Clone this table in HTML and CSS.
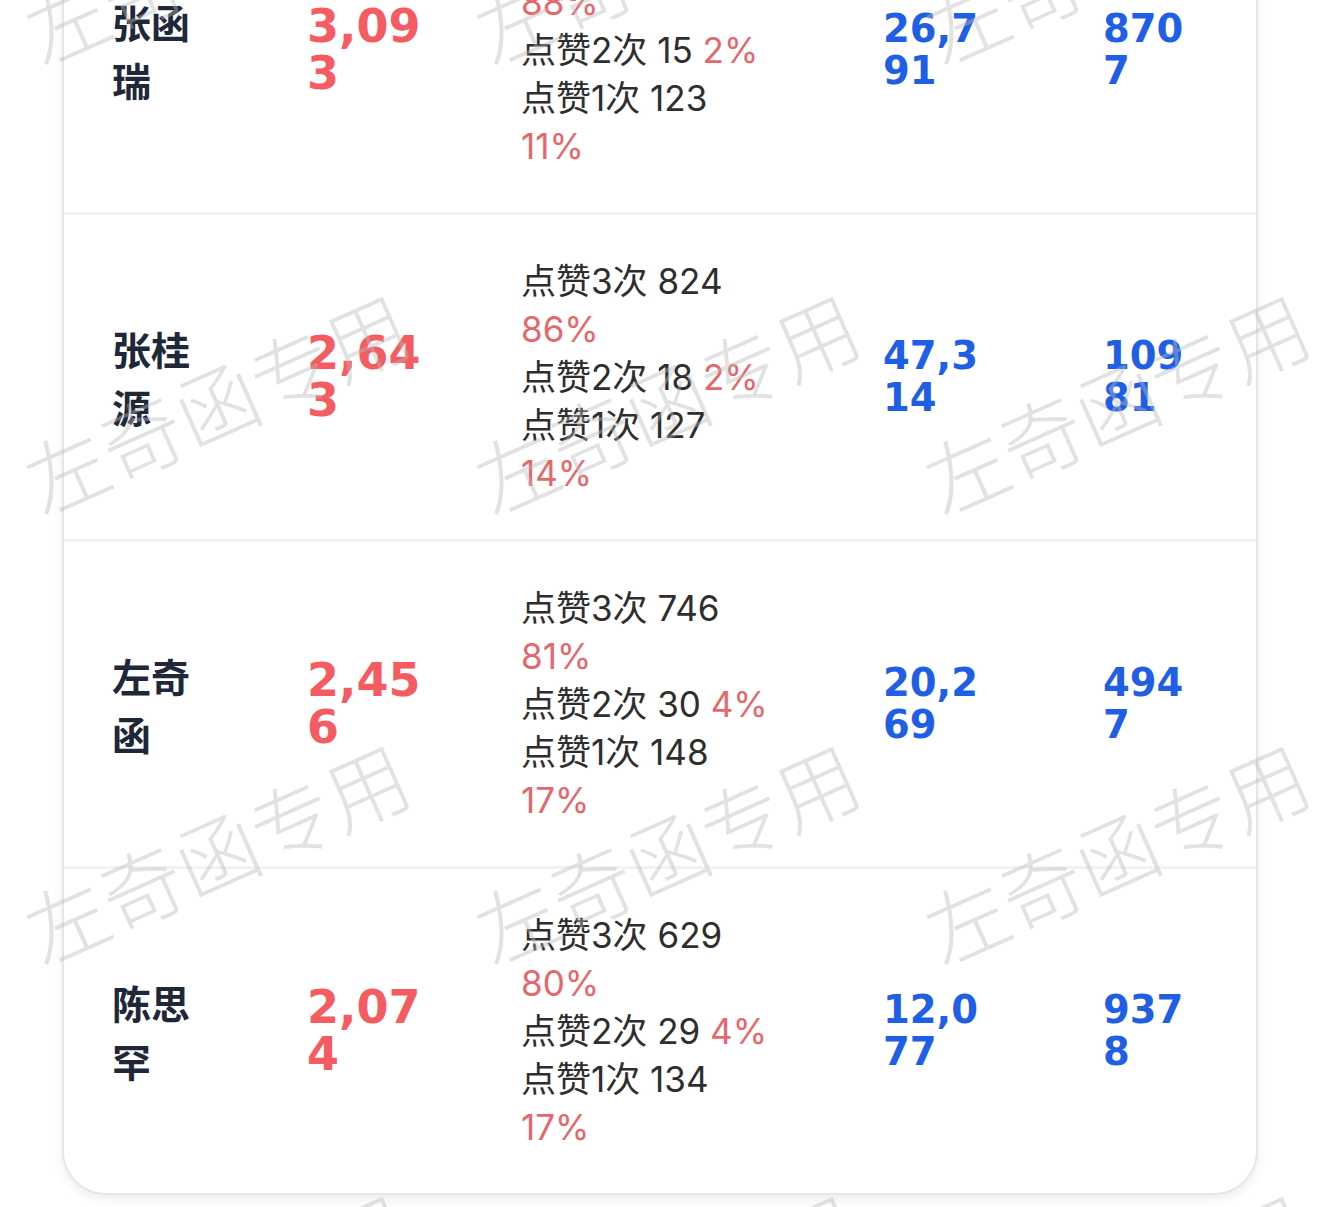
FILE: index.html
```html
<!DOCTYPE html>
<html lang="zh-CN">
<head>
<meta charset="utf-8">
<title>点赞统计</title>
<link rel="stylesheet" href="styles.css">
</head>
<body>
<main class="page">
  <section class="card">
    <div class="row">
      <div class="cell name">张函瑞</div>
      <div class="cell total">3,093</div>
      <div class="cell tiers">
        <div class="tier">点赞3次 976 <span class="pct">88%</span></div>
        <div class="tier">点赞2次 15 <span class="pct">2%</span></div>
        <div class="tier">点赞1次 123 <span class="pct">11%</span></div>
      </div>
      <div class="cell metric">26,791</div>
      <div class="cell metric">8707</div>
    </div>
    <div class="row">
      <div class="cell name">张桂源</div>
      <div class="cell total">2,643</div>
      <div class="cell tiers">
        <div class="tier">点赞3次 824 <span class="pct">86%</span></div>
        <div class="tier">点赞2次 18 <span class="pct">2%</span></div>
        <div class="tier">点赞1次 127 <span class="pct">14%</span></div>
      </div>
      <div class="cell metric">47,314</div>
      <div class="cell metric">10981</div>
    </div>
    <div class="row">
      <div class="cell name">左奇函</div>
      <div class="cell total">2,456</div>
      <div class="cell tiers">
        <div class="tier">点赞3次 746 <span class="pct">81%</span></div>
        <div class="tier">点赞2次 30 <span class="pct">4%</span></div>
        <div class="tier">点赞1次 148 <span class="pct">17%</span></div>
      </div>
      <div class="cell metric">20,269</div>
      <div class="cell metric">4947</div>
    </div>
    <div class="row">
      <div class="cell name">陈思罕</div>
      <div class="cell total">2,074</div>
      <div class="cell tiers">
        <div class="tier">点赞3次 629 <span class="pct">80%</span></div>
        <div class="tier">点赞2次 29 <span class="pct">4%</span></div>
        <div class="tier">点赞1次 134 <span class="pct">17%</span></div>
      </div>
      <div class="cell metric">12,077</div>
      <div class="cell metric">9378</div>
    </div>
  </section>
</main>
<div class="watermark" aria-hidden="true">
  <span class="wm">左奇函专用</span><span class="wm">左奇函专用</span><span class="wm">左奇函专用</span>
  <span class="wm">左奇函专用</span><span class="wm">左奇函专用</span><span class="wm">左奇函专用</span>
  <span class="wm">左奇函专用</span><span class="wm">左奇函专用</span><span class="wm">左奇函专用</span>
  <span class="wm">左奇函专用</span><span class="wm">左奇函专用</span><span class="wm">左奇函专用</span>
</div>
</body>
</html>
```

FILE: styles.css
```css
html, body {
  margin: 0;
  padding: 0;
  background: #ffffff;
}

body {
  font-family: "Noto Sans CJK SC", "Noto Sans", sans-serif;
  color: #2e2e2e;
  overflow: hidden;
}

.page {
  padding: 0 62px 40px;
  margin-top: -114px;
}

.card {
  background: #ffffff;
  border: 2px solid #e3e6ec;
  border-radius: 44px;
  box-shadow: 0 5px 10px rgba(40, 50, 80, 0.08);
  overflow: hidden;
}

.row {
  display: grid;
  grid-template-columns: 195px 214px 362px 220px 1fr;
  align-items: center;
  padding: 42px 0;
  border-bottom: 3px solid #eff2f6;
}

.row:last-child {
  border-bottom: none;
}

.cell {
  padding: 0 48px;
  min-width: 0;
}

.name {
  font-size: 39px;
  line-height: 58px;
  font-weight: 700;
  color: #1e2838;
}

.total {
  font-family: "DejaVu Sans", sans-serif;
  font-weight: 700;
  font-size: 46px;
  line-height: 47px;
  color: #f45c62;
  word-break: break-all;
}

.tiers {
  font-family: "Inter", "Noto Sans CJK SC", sans-serif;
  font-size: 35px;
  line-height: 48px;
  color: #2e2e2e;
  padding-right: 60px;
}

.pct {
  color: #e5676b;
}

.metric {
  font-family: "DejaVu Sans", sans-serif;
  font-weight: 700;
  font-size: 38.5px;
  line-height: 42px;
  color: #1f5fe6;
  word-break: break-all;
  box-sizing: border-box;
  width: 148px;
  padding-right: 0;
}

.watermark {
  position: fixed;
  left: 45px;
  top: -378px;
  display: grid;
  grid-template-columns: repeat(3, 450px);
  grid-auto-rows: 450px;
  pointer-events: none;
  z-index: 10;
}

.wm {
  align-self: end;
  justify-self: start;
  font-family: "Noto Sans CJK SC", sans-serif;
  font-size: 82px;
  line-height: 1;
  font-weight: 300;
  color: rgba(185, 185, 185, 0.42);
  white-space: nowrap;
  transform-origin: left bottom;
  transform: rotate(-24deg);
}
```
